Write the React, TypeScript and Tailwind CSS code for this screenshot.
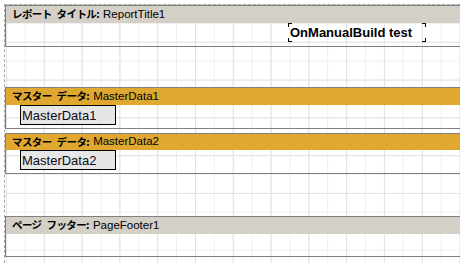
import React from 'react';

const jp = "font-['Noto_Sans_CJK_JP',sans-serif]";
const latin = "font-['Liberation_Sans',Arial,sans-serif]";

interface BandProps {
  title: [string, string];
  name: string;
  headerClass: string;
  headerH: string;
  bodyH: string;
  className?: string;
  children?: React.ReactNode;
}

function Band({ title, name, headerClass, headerH, bodyH, className = '', children }: BandProps) {
  return (
    <div className={`w-[470px] border border-[#808080] shrink-0 ${className}`}>
      {/* band caption */}
      <div className={`${headerH} ${headerClass} flex items-center pl-[6px] text-black whitespace-nowrap`}>
        <span className={`${jp} text-[10.5px] font-bold tracking-[-0.6px] leading-none`}>{title[0]}</span>
        <span className={`${jp} text-[10.5px] font-bold tracking-[-0.6px] leading-none ml-[5px]`}>{title[1]}</span>
        <span className={`${latin} text-[11.5px] leading-none ml-[4px]`}>{name}</span>
      </div>
      <div className={`${bodyH} relative`}>{children}</div>
    </div>
  );
}

function DataBox({ label }: { label: string }) {
  return (
    <div className={`ml-[14px] w-[96px] h-[20px] border border-black bg-[#e6e6e6] pl-[1px] flex items-center ${latin} text-[13px] text-[#0a0a1a] leading-none`}>
      {label}
    </div>
  );
}

// corner ticks around the selected text object
function Corner({ pos }: { pos: string }) {
  return <span className={`absolute w-[4px] h-[4px] border-black ${pos}`} />;
}

export default function App() {
  return (
    <div className="w-[460px] h-[263px] overflow-hidden bg-white">
      <div className="ml-[4px] mt-[4px] h-[259px] border-l border-t border-dashed border-[#a8a8a8] bg-[linear-gradient(to_right,#e2e2e2_1px,transparent_1px),linear-gradient(to_bottom,#e2e2e2_1px,transparent_1px),linear-gradient(to_right,#efefef_1px,transparent_1px),linear-gradient(to_bottom,#efefef_1px,transparent_1px)] bg-[size:37.8px_37.8px,37.8px_37.8px,18.9px_18.9px,18.9px_18.9px] bg-[position:1px_-1px] flex flex-col">
        <Band title={['レポート', 'タイトル:']} name="ReportTitle1" headerClass="bg-[#d4d0c8]" headerH="h-[17px]" bodyH="h-[23px]">
          <div className="absolute left-[282px] top-0 w-[138px] h-[19px] flex items-center pl-[2px]">
            <span className={`${latin} text-[13px] font-bold text-black leading-none whitespace-nowrap`}>OnManualBuild test</span>
            <Corner pos="left-0 top-0 border-l border-t" />
            <Corner pos="right-0 top-0 border-r border-t" />
            <Corner pos="left-0 bottom-0 border-l border-b" />
            <Corner pos="right-0 bottom-0 border-r border-b" />
          </div>
        </Band>

        <Band title={['マスター', 'データ:']} name="MasterData1" headerClass="bg-[#e0a830]" headerH="h-[17px]" bodyH="h-[23px]" className="mt-[40px]">
          <DataBox label="MasterData1" />
        </Band>

        <Band title={['マスター', 'データ:']} name="MasterData2" headerClass="bg-[#e0a830]" headerH="h-[16px]" bodyH="h-[23px]" className="mt-[4px]">
          <DataBox label="MasterData2" />
        </Band>

        <Band title={['ページ', 'フッター:']} name="PageFooter1" headerClass="bg-[#d4d0c8]" headerH="h-[17px]" bodyH="h-[22px]" className="mt-[42px]" />
      </div>
    </div>
  );
}
